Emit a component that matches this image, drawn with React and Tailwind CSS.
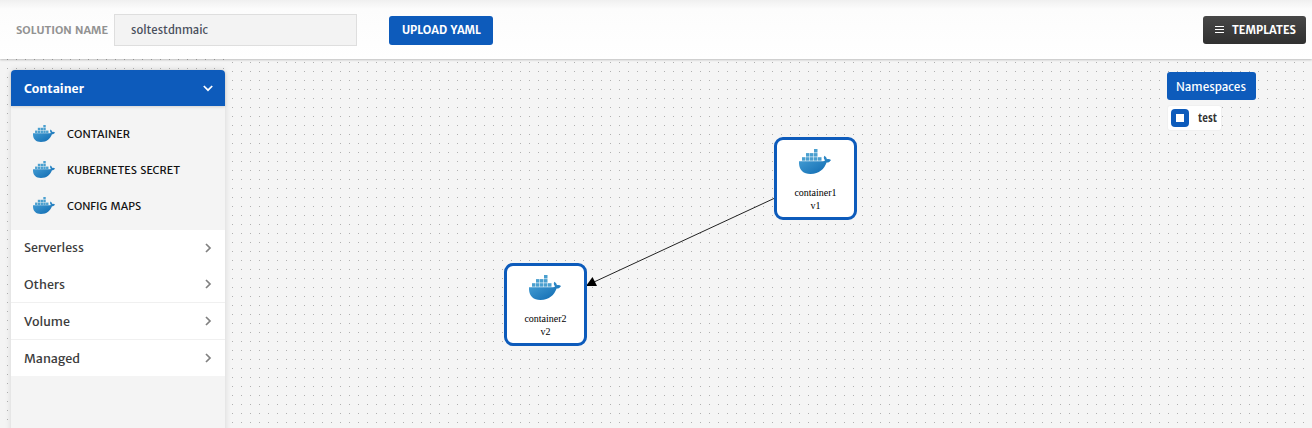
const font = "font-['Merriweather_Sans','Noto_Sans',sans-serif]";

function Docker({ className }) {
  return (
    <svg className={className} viewBox="0 0 32 25" preserveAspectRatio="none">
      <defs>
        <linearGradient id="whale" x1="0" y1="0" x2="1" y2="1">
          <stop offset="0" stopColor="#4aa3d8" />
          <stop offset="1" stopColor="#0b66ae" />
        </linearGradient>
      </defs>
      <path
        fill="url(#whale)"
        d="M0 12.3H23C24.6 12.3 25.800 12 26 11.300C24.600 10 24.500 8.300 25.300 6.800C26.900 7.700 27.700 8.900 27.900 10.200C29.400 9.900 31 10.200 32 10.900C31.200 12.600 29.600 13.500 27.600 13.600C25.300 20 20.400 25 11.500 25C3.500 25 -0.500 20 0 12.300Z"
      />
      <g fill="#4a9fcf">
        <rect x="3" y="8.200" width="3.500" height="3.500" />
        <rect x="7" y="8.200" width="3.500" height="3.500" />
        <rect x="11" y="8.200" width="3.500" height="3.500" />
        <rect x="15" y="8.200" width="3.500" height="3.500" />
        <rect x="19" y="8.200" width="3.500" height="3.500" />
        <rect x="7" y="4.100" width="3.500" height="3.500" />
        <rect x="11" y="4.100" width="3.500" height="3.500" />
        <rect x="15" y="4.100" width="3.500" height="3.500" />
        <rect x="15" y="0" width="3.500" height="3.500" />
      </g>
    </svg>
  );
}

function Chevron({ down }) {
  return (
    <svg className="h-[10px] w-[10px]" viewBox="0 0 10 10" fill="none" stroke={down ? "#fff" : "#808080"} strokeWidth="1.7">
      <path d={down ? "M0.800 3L5 7.200L9.200 3" : "M3 1L7 5L3 9"} />
    </svg>
  );
}

function Label({ children, width, size, fill, weight, className, baseline = 14 }) {
  return (
    <svg className={`h-5 shrink-0 overflow-visible ${className || ""}`} width={width} fill={fill}>
      <text x="0" y={baseline} fontSize={size} fontWeight={weight} wordSpacing="1.5" textLength={width} lengthAdjust="spacingAndGlyphs">{children}</text>
    </svg>
  );
}

function Item({ label, width }) {
  return (
    <li className="flex h-9 items-center pl-[22px]">
      <Docker className="mb-[2px] h-[17px] w-[22px]" />
      <Label width={width} size={11} fill="#111" className="ml-[12px]">{label}</Label>
    </li>
  );
}

function Node({ name, version, className }) {
  return (
    <div className={`absolute flex h-[83px] w-[83px] flex-col items-center rounded-[9px] border-[3px] border-[#0d5bbb] bg-white pt-[9px] font-['Liberation_Serif',serif] text-[10px] leading-[13px] text-black ${className}`}>
      <Docker className="mr-px mb-[12px] h-[25px] w-[32px]" />
      <span>{name}</span>
      <span>{version}</span>
    </div>
  );
}

export default function App() {
  return (
    <div className={`flex h-[428px] w-[1312px] flex-col overflow-hidden bg-[#f5f5f5] ${font}`}>
      <header className="z-10 flex h-[59px] shrink-0 items-center bg-linear-to-b from-[#f0f0f0] via-[#fcfcfc] via-15% to-white pr-[6px] pl-4 shadow-[0_1px_2px_rgba(0,0,0,0.22)]">
        <Label width={92} size={11} weight={700} fill="#929292">SOLUTION NAME</Label>
        <div className="ml-[6px] flex h-8 w-[243px] items-center border border-[#dedede] bg-[#f3f3f3] pl-4">
          <Label width={77} size={12.5} fill="#494f5c">soltestdnmaic</Label>
        </div>
        <button className="ml-8 mt-px flex h-[29px] w-[104px] items-center justify-center rounded-[3px] bg-[#0d5bbb]">
          <Label width={79} size={11.5} weight={700} fill="#fff">UPLOAD YAML</Label>
        </button>
        <button className="ml-auto flex h-[28px] w-[103px] items-center rounded-[3px] bg-linear-to-b from-[#474747] to-[#303030] pl-3">
          <span className="flex w-[9px] flex-col gap-[2px]">
            <i className="h-px bg-white" />
            <i className="h-px bg-white" />
            <i className="h-px bg-white" />
          </span>
          <Label width={64} size={11.5} weight={700} fill="#fff" className="ml-2">TEMPLATES</Label>
        </button>
      </header>
      <main className="relative flex flex-1 items-start bg-[radial-gradient(circle_at_4.500px_4.500px,#b0b0b0_0.700px,transparent_0.800px)] bg-[length:9px_9px] bg-[position:3px_-1px]">
        <div className="h-full w-[230px] shrink-0 bg-[#f4f4f4] bg-[radial-gradient(circle_at_4.500px_4.500px,#b0b0b0_0.700px,transparent_0.800px)] bg-[length:9px_9px] bg-[position:3px_-4px] pt-[11px] pl-[11px]">
          <aside className="h-[370px] w-[214px] rounded-t-[4px] bg-[#f4f4f4] shadow-[0_0_6px_rgba(0,0,0,0.13)]">
            <div className="flex h-9 items-center justify-between rounded-t-[4px] bg-[#0d5bbb] pr-3 pl-[13px] shadow-[0_1px_3px_rgba(0,0,0,0.15)]">
              <Label width={60} size={13} weight={600} fill="#fff" baseline={15}>Container</Label>
              <Chevron down />
            </div>
            <ul className="h-[124px] pt-[10px]">
              <Item label="CONTAINER" width={63} />
              <Item label="KUBERNETES SECRET" width={113} />
              <Item label="CONFIG MAPS" width={74} />
            </ul>
            {[["Serverless", 60], ["Others", 41], ["Volume", 46], ["Managed", 56]].map(([name, width], i) => (
              <div key={name} className={`flex items-center justify-between bg-white pr-3 pl-[13px] ${i === 0 ? "h-[35px]" : i === 1 ? "h-[38px] border-b border-[#f0f0f0]" : i === 2 ? "h-[37px] border-b border-[#f0f0f0]" : "h-[36px]"}`}>
                <Label width={width} size={13} fill="#3c3c3c" baseline={i === 0 ? 14 : 15}>{name}</Label>
                <Chevron />
              </div>
            ))}
          </aside>
        </div>
        <svg className="absolute top-0 left-0 h-full w-full">
          <path d="M775 139L594 223" stroke="#222" />
          <path d="M586 227L592.500 218L597 227Z" fill="#000" />
        </svg>
        <Node name="container1" version="v1" className="top-[78px] left-[774px]" />
        <Node name="container2" version="v2" className="top-[204px] left-[504px]" />
        <section className="mt-[13px] ml-[937px] flex flex-col items-start">
          <div className="flex h-[28px] w-[89px] items-center justify-center rounded-[3px] bg-[#0d5bbb]">
            <Label width={70} size={13} fill="#fff" className="-ml-px" baseline={15}>Namespaces</Label>
          </div>
          <div className="mt-[5px] flex h-[26px] w-[55px] items-center rounded-[3px] border border-[#f0f0f0] bg-white pl-[3px]">
            <span className="flex h-[18px] w-[18px] items-center justify-center rounded-[4px] bg-[#0d5bbb]">
              <i className="h-2 w-2 bg-white" />
            </span>
            <Label width={19} size={12} weight={600} fill="#333" className="ml-[9px]">test</Label>
          </div>
        </section>
      </main>
    </div>
  );
}
